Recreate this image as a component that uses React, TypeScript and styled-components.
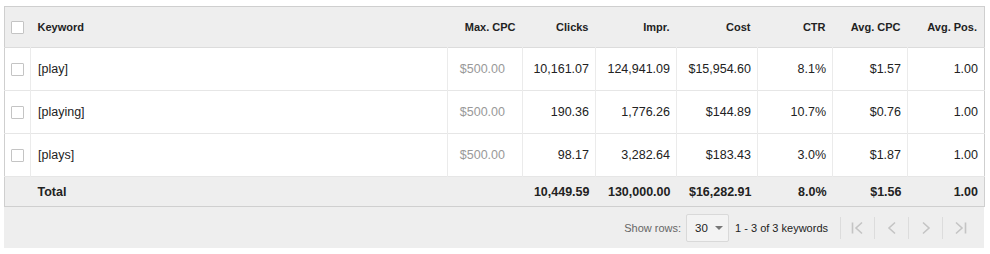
import styled, { createGlobalStyle } from 'styled-components';

const GlobalStyle = createGlobalStyle`
  body {
    margin: 0;
    background: #fff;
    font-family: Arial, "Liberation Sans", sans-serif;
  }
`;

type Row = {
  keyword: string;
  maxCpc: string;
  clicks: string;
  impr: string;
  cost: string;
  ctr: string;
  avgCpc: string;
  avgPos: string;
};

const rows: Row[] = [
  { keyword: '[play]', maxCpc: '$500.00', clicks: '10,161.07', impr: '124,941.09', cost: '$15,954.60', ctr: '8.1%', avgCpc: '$1.57', avgPos: '1.00' },
  { keyword: '[playing]', maxCpc: '$500.00', clicks: '190.36', impr: '1,776.26', cost: '$144.89', ctr: '10.7%', avgCpc: '$0.76', avgPos: '1.00' },
  { keyword: '[plays]', maxCpc: '$500.00', clicks: '98.17', impr: '3,282.64', cost: '$183.43', ctr: '3.0%', avgCpc: '$1.87', avgPos: '1.00' },
];

const widths = [26, 417, 75, 73, 81, 81, 75, 75, 77];

export default function App() {
  return (
    <>
      <GlobalStyle />
      <Wrapper>
        <Table>
          <colgroup>
            {widths.map((w, i) => (
              <col key={i} style={{ width: w }} />
            ))}
          </colgroup>
          <thead>
            <HeadRow>
              <Th><Checkbox /></Th>
              <Th $left>Keyword</Th>
              <Th>Max. CPC</Th>
              <Th>Clicks</Th>
              <Th>Impr.</Th>
              <Th>Cost</Th>
              <Th>CTR</Th>
              <Th>Avg. CPC</Th>
              <Th>Avg. Pos.</Th>
            </HeadRow>
          </thead>
          <tbody>
            {rows.map((r) => (
              <BodyRow key={r.keyword}>
                <Td><Checkbox /></Td>
                <Td $left>{r.keyword}</Td>
                <Td $muted>{r.maxCpc}</Td>
                <Td>{r.clicks}</Td>
                <Td>{r.impr}</Td>
                <Td>{r.cost}</Td>
                <Td>{r.ctr}</Td>
                <Td>{r.avgCpc}</Td>
                <Td>{r.avgPos}</Td>
              </BodyRow>
            ))}
            <TotalRow>
              <TotalCell />
              <TotalCell $left>Total</TotalCell>
              <TotalCell />
              <TotalCell>10,449.59</TotalCell>
              <TotalCell>130,000.00</TotalCell>
              <TotalCell>$16,282.91</TotalCell>
              <TotalCell>8.0%</TotalCell>
              <TotalCell>$1.56</TotalCell>
              <TotalCell>1.00</TotalCell>
            </TotalRow>
          </tbody>
        </Table>

        <Footer>
          <Label>Show rows:</Label>
          <Select>
            30
            <Caret />
          </Select>
          <Range>1 - 3 of 3 keywords</Range>
          <Pager>
            <PageButton>
              <svg width="16" height="14" viewBox="0 0 16 14">
                <path d="M2.5 1.5v11M12 1.5 6 7l6 5.5" fill="none" stroke="#c4c4c4" strokeWidth="1.6" />
              </svg>
            </PageButton>
            <PageButton>
              <svg width="16" height="14" viewBox="0 0 16 14">
                <path d="M11 1.5 5 7l6 5.5" fill="none" stroke="#c4c4c4" strokeWidth="1.6" />
              </svg>
            </PageButton>
            <PageButton>
              <svg width="16" height="14" viewBox="0 0 16 14">
                <path d="M5 1.5 11 7l-6 5.5" fill="none" stroke="#c4c4c4" strokeWidth="1.6" />
              </svg>
            </PageButton>
            <PageButton>
              <svg width="16" height="14" viewBox="0 0 16 14">
                <path d="M4 1.5 10 7l-6 5.5M13.5 1.5v11" fill="none" stroke="#c4c4c4" strokeWidth="1.6" />
              </svg>
            </PageButton>
          </Pager>
        </Footer>
      </Wrapper>
    </>
  );
}

const Wrapper = styled.div`
  width: 980px;
  margin: 6px 0 0 4px;
`;

const Table = styled.table`
  width: 980px;
  table-layout: fixed;
  border-collapse: collapse;
  border: 1px solid #cfcfcf;
  font-size: 12.5px;
  color: #222;
`;

const HeadRow = styled.tr`
  height: 41px;
  background: #eeeeee;
  border-bottom: 1px solid #dcdcdc;
`;

const Th = styled.th<{ $left?: boolean }>`
  padding: 0 7px 0 ${(p) => (p.$left ? '7px' : '0')};
  text-align: ${(p) => (p.$left ? 'left' : 'right')};
  font-size: 11px;
  font-weight: bold;
  color: #222;
  white-space: nowrap;

  &:first-child {
    padding: 0 0 0 6px;
    text-align: left;
  }
`;

const BodyRow = styled.tr`
  height: 43px;
  background: #fff;
  border-bottom: 1px solid #e6e6e6;
`;

const Td = styled.td<{ $left?: boolean; $muted?: boolean }>`
  padding: ${(p) => (p.$muted ? '0 17px 0 0' : p.$left ? '0 7px' : '0 6px 0 0')};
  text-align: ${(p) => (p.$left ? 'left' : 'right')};
  color: ${(p) => (p.$muted ? '#999' : '#222')};
  border-left: 1px solid #ebebeb;
  white-space: nowrap;

  &:first-child {
    padding: 0 0 0 6px;
    border-left: none;
  }
`;

const TotalRow = styled.tr`
  height: 30px;
  background: #eeeeee;
`;

const TotalCell = styled.td<{ $left?: boolean }>`
  padding: ${(p) => (p.$left ? '0 7px' : '0 6px 0 0')};
  text-align: ${(p) => (p.$left ? 'left' : 'right')};
  font-weight: bold;
  color: #222;
  white-space: nowrap;
`;

const Checkbox = styled.span`
  display: block;
  width: 11px;
  height: 11px;
  border: 1px solid #c4c4c4;
  border-radius: 1px;
  background: #fff;
`;

const Footer = styled.div`
  height: 41px;
  background: #eeeeee;
  display: flex;
  align-items: center;
  justify-content: flex-end;
  padding-right: 8px;
  box-sizing: border-box;
  font-size: 11px;
`;

const Label = styled.span`
  color: #666;
  margin-right: 5px;
`;

const Select = styled.div`
  box-sizing: border-box;
  width: 43px;
  height: 28px;
  border: 1px solid #d9d9d9;
  border-radius: 2px;
  background: #f3f3f3;
  display: flex;
  align-items: center;
  gap: 7px;
  padding-left: 8px;
  color: #222;
  font-size: 11.5px;
`;

const Caret = styled.span`
  width: 0;
  height: 0;
  border-left: 4px solid transparent;
  border-right: 4px solid transparent;
  border-top: 4px solid #777;
`;

const Range = styled.span`
  color: #222;
  margin: 0 12px 0 6px;
`;

const Pager = styled.div`
  display: flex;
  align-items: center;
`;

const PageButton = styled.div`
  width: 33px;
  height: 22px;
  border-left: 1px solid #dcdcdc;
  display: flex;
  align-items: center;
  justify-content: center;
`;
